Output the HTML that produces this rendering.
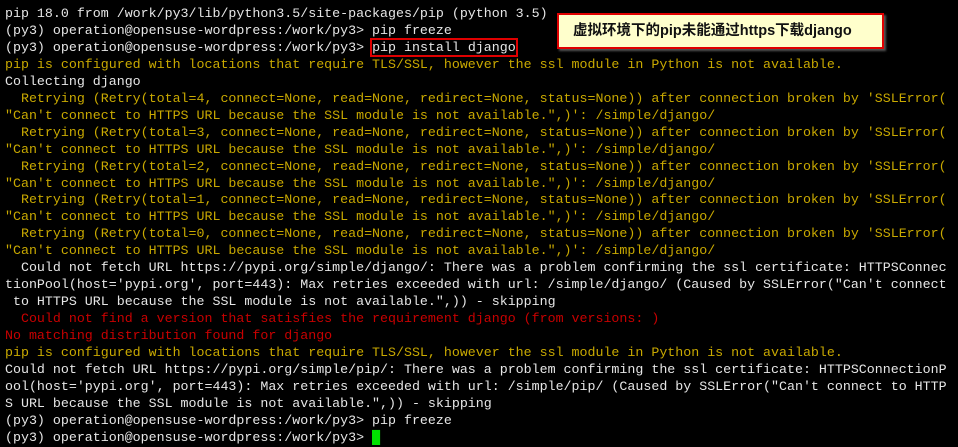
<!DOCTYPE html>
<html><head><meta charset="utf-8"><style>
body{margin:0;width:958px;height:440px;background:#000;overflow:hidden;position:relative}
pre{margin:0;position:absolute;left:5px;top:6px;font-family:"Liberation Mono",monospace;font-size:13.3px;line-height:16.96px;color:#e6e6e6;white-space:pre}
.y{color:#c9a900}.r{color:#c80000}
.box{outline:2px solid #e00000;outline-offset:0px}
.cur{background:#00e000;color:#00e000}
.note{position:absolute;left:557px;top:13px;height:32px;background:#ffffcc;border:2px solid #e00000;box-shadow:2px 2px 2px #555;font-family:"Liberation Sans","WenQuanYi Zen Hei","Noto Sans CJK SC",sans-serif;font-size:14.5px;font-weight:bold;color:#111;line-height:32px;padding-left:14px;width:309px;white-space:nowrap}
</style></head><body>
<pre>pip 18.0 from /work/py3/lib/python3.5/site-packages/pip (python 3.5)
(py3) operation@opensuse-wordpress:/work/py3&gt; pip freeze
(py3) operation@opensuse-wordpress:/work/py3&gt; <span class="box">pip install django</span>
<span class="y">pip is configured with locations that require TLS/SSL, however the ssl module in Python is not available.</span>
Collecting django
<span class="y">  Retrying (Retry(total=4, connect=None, read=None, redirect=None, status=None)) after connection broken by 'SSLError(
"Can't connect to HTTPS URL because the SSL module is not available.",)': /simple/django/
  Retrying (Retry(total=3, connect=None, read=None, redirect=None, status=None)) after connection broken by 'SSLError(
"Can't connect to HTTPS URL because the SSL module is not available.",)': /simple/django/
  Retrying (Retry(total=2, connect=None, read=None, redirect=None, status=None)) after connection broken by 'SSLError(
"Can't connect to HTTPS URL because the SSL module is not available.",)': /simple/django/
  Retrying (Retry(total=1, connect=None, read=None, redirect=None, status=None)) after connection broken by 'SSLError(
"Can't connect to HTTPS URL because the SSL module is not available.",)': /simple/django/
  Retrying (Retry(total=0, connect=None, read=None, redirect=None, status=None)) after connection broken by 'SSLError(
"Can't connect to HTTPS URL because the SSL module is not available.",)': /simple/django/</span>
  Could not fetch URL https://pypi.org/simple/django/: There was a problem confirming the ssl certificate: HTTPSConnec
tionPool(host='pypi.org', port=443): Max retries exceeded with url: /simple/django/ (Caused by SSLError("Can't connect
 to HTTPS URL because the SSL module is not available.",)) - skipping
<span class="r">  Could not find a version that satisfies the requirement django (from versions: )
No matching distribution found for django</span>
<span class="y">pip is configured with locations that require TLS/SSL, however the ssl module in Python is not available.</span>
Could not fetch URL https://pypi.org/simple/pip/: There was a problem confirming the ssl certificate: HTTPSConnectionP
ool(host='pypi.org', port=443): Max retries exceeded with url: /simple/pip/ (Caused by SSLError("Can't connect to HTTP
S URL because the SSL module is not available.",)) - skipping
(py3) operation@opensuse-wordpress:/work/py3&gt; pip freeze
(py3) operation@opensuse-wordpress:/work/py3&gt; <span class="cur">&#9608;</span></pre>
<div class="note">虚拟环境下的pip未能通过https下载django</div>
</body></html>
